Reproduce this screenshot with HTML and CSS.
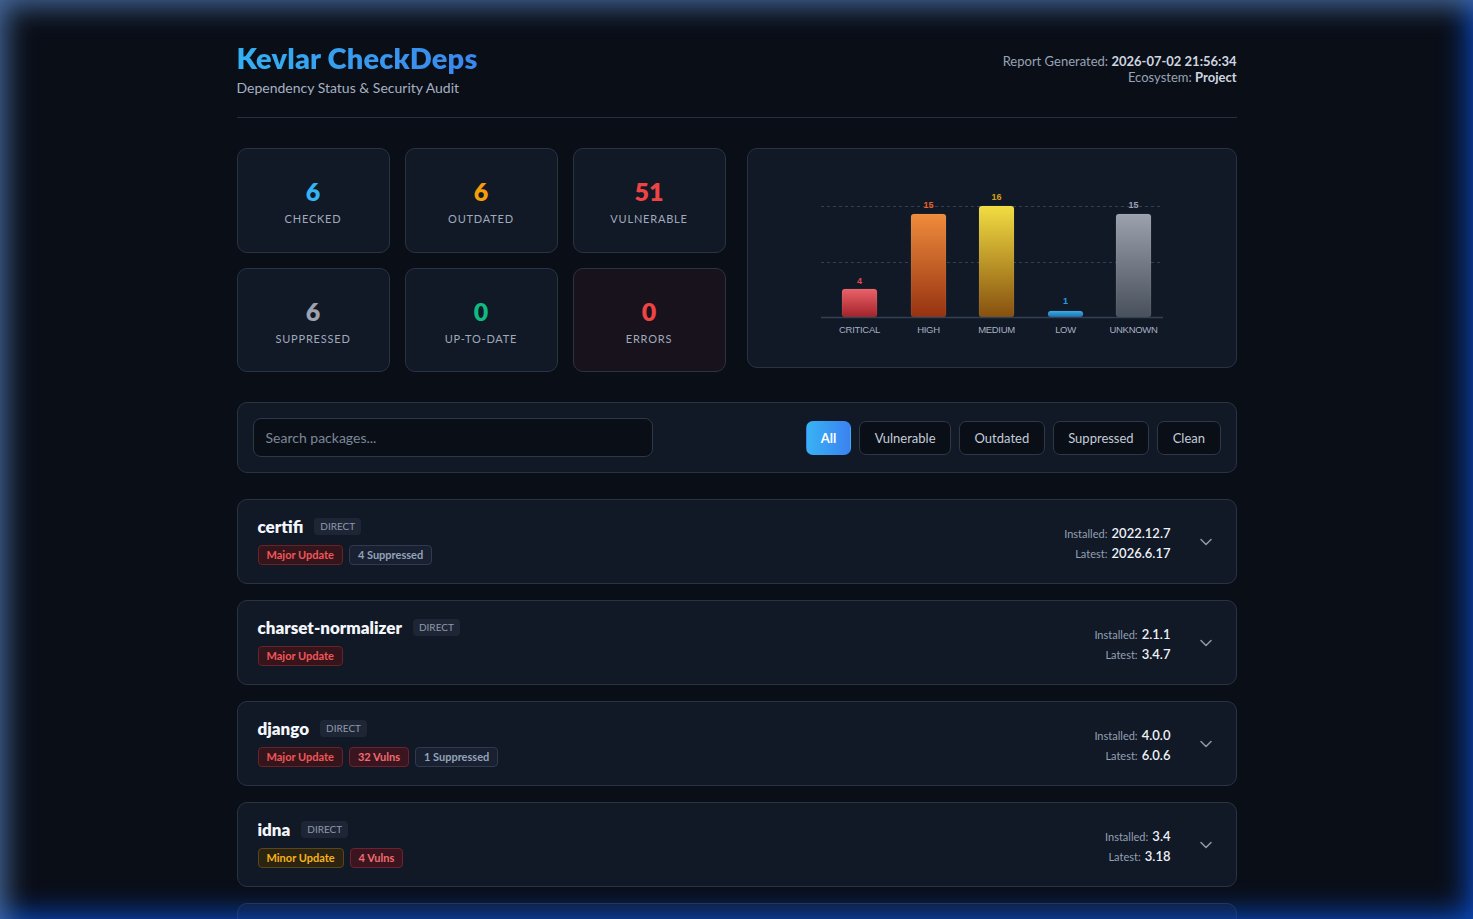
FILE: index.html
```html
<!DOCTYPE html>
<html lang="en">
<head>
<meta charset="utf-8">
<title>Kevlar CheckDeps</title>
<link rel="stylesheet" href="styles.css">
</head>
<body>
<div class="glow"></div>
<div class="container">
  <header class="header">
    <div>
      <h1 class="title">Kevlar CheckDeps</h1>
      <div class="subtitle">Dependency Status &amp; Security Audit</div>
    </div>
    <div class="meta">
      <div>Report Generated: <b>2026-07-02 21:56:34</b></div>
      <div>Ecosystem: <b>Project</b></div>
    </div>
  </header>

  <section class="overview">
    <div class="stats">
      <div class="stat"><div class="num c-blue">6</div><div class="lbl">Checked</div></div>
      <div class="stat"><div class="num c-orange">6</div><div class="lbl">Outdated</div></div>
      <div class="stat"><div class="num c-red">51</div><div class="lbl">Vulnerable</div></div>
      <div class="stat"><div class="num c-gray">6</div><div class="lbl">Suppressed</div></div>
      <div class="stat"><div class="num c-green">0</div><div class="lbl">Up-to-date</div></div>
      <div class="stat stat-err"><div class="num c-red">0</div><div class="lbl">Errors</div></div>
    </div>
    <div class="chart-card">
      <svg class="chart" width="360" height="160" viewBox="0 0 360 160">
        <defs>
          <linearGradient id="gCrit" x1="0" y1="0" x2="0" y2="1"><stop offset="0" stop-color="#ea6169"/><stop offset="1" stop-color="#a3232a"/></linearGradient>
          <linearGradient id="gHigh" x1="0" y1="0" x2="0" y2="1"><stop offset="0" stop-color="#ef8c3c"/><stop offset="1" stop-color="#963211"/></linearGradient>
          <linearGradient id="gMed" x1="0" y1="0" x2="0" y2="1"><stop offset="0" stop-color="#f2dd42"/><stop offset="1" stop-color="#86500f"/></linearGradient>
          <linearGradient id="gLow" x1="0" y1="0" x2="0" y2="1"><stop offset="0" stop-color="#3aabe2"/><stop offset="1" stop-color="#1a72b4"/></linearGradient>
          <linearGradient id="gUnk" x1="0" y1="0" x2="0" y2="1"><stop offset="0" stop-color="#9ba1ad"/><stop offset="1" stop-color="#48505c"/></linearGradient>
        </defs>
        <line x1="9" y1="28.5" x2="351" y2="28.5" class="grid"/>
        <line x1="9" y1="84.5" x2="351" y2="84.5" class="grid"/>
        <rect x="30" y="111" width="35" height="28" rx="3" fill="url(#gCrit)" class="bar"/>
        <rect x="99" y="36" width="35" height="103" rx="3" fill="url(#gHigh)" class="bar"/>
        <rect x="167" y="28" width="35" height="111" rx="3" fill="url(#gMed)" class="bar"/>
        <rect x="236" y="133" width="35" height="6" rx="3" fill="url(#gLow)" class="bar"/>
        <rect x="304" y="36" width="35" height="103" rx="3" fill="url(#gUnk)" class="bar"/>
        <line x1="9" y1="139.5" x2="351" y2="139.5" class="axis"/>
        <text x="47.5" y="106" class="val" fill="#e5484d">4</text>
        <text x="116.5" y="30" class="val" fill="#e8622c">15</text>
        <text x="184.5" y="22" class="val" fill="#d4a017">16</text>
        <text x="253.5" y="126" class="val" fill="#2a9be0">1</text>
        <text x="321.5" y="30" class="val" fill="#9aa3b2">15</text>
        <text x="47.5" y="155" class="cat">CRITICAL</text>
        <text x="116.5" y="155" class="cat">HIGH</text>
        <text x="184.5" y="155" class="cat">MEDIUM</text>
        <text x="253.5" y="155" class="cat">LOW</text>
        <text x="321.5" y="155" class="cat">UNKNOWN</text>
      </svg>
    </div>
  </section>

  <section class="filter-bar">
    <input class="search" type="text" placeholder="Search packages...">
    <div class="filters">
      <button class="fbtn active">All</button>
      <button class="fbtn">Vulnerable</button>
      <button class="fbtn">Outdated</button>
      <button class="fbtn">Suppressed</button>
      <button class="fbtn">Clean</button>
    </div>
  </section>

  <section class="pkg-list">
    <div class="pkg">
      <div class="pkg-main">
        <div class="pkg-head"><span class="pkg-name">certifi</span><span class="tag">Direct</span></div>
        <div class="badges"><span class="badge b-major">Major Update</span><span class="badge b-supp">4 Suppressed</span></div>
      </div>
      <div class="pkg-ver">
        <div class="vrow"><span class="vl">Installed:</span> <span class="vv">2022.12.7</span></div>
        <div class="vrow"><span class="vl">Latest:</span> <span class="vv">2026.6.17</span></div>
      </div>
      <svg class="chev" width="14" height="14" viewBox="0 0 14 14"><path d="M2 4.5 7 9.5 12 4.5" fill="none" stroke="#8b95a7" stroke-width="1.6" stroke-linecap="round" stroke-linejoin="round"/></svg>
    </div>
    <div class="pkg">
      <div class="pkg-main">
        <div class="pkg-head"><span class="pkg-name">charset-normalizer</span><span class="tag">Direct</span></div>
        <div class="badges"><span class="badge b-major">Major Update</span></div>
      </div>
      <div class="pkg-ver">
        <div class="vrow"><span class="vl">Installed:</span> <span class="vv">2.1.1</span></div>
        <div class="vrow"><span class="vl">Latest:</span> <span class="vv">3.4.7</span></div>
      </div>
      <svg class="chev" width="14" height="14" viewBox="0 0 14 14"><path d="M2 4.5 7 9.5 12 4.5" fill="none" stroke="#8b95a7" stroke-width="1.6" stroke-linecap="round" stroke-linejoin="round"/></svg>
    </div>
    <div class="pkg">
      <div class="pkg-main">
        <div class="pkg-head"><span class="pkg-name">django</span><span class="tag">Direct</span></div>
        <div class="badges"><span class="badge b-major">Major Update</span><span class="badge b-vuln">32 Vulns</span><span class="badge b-supp">1 Suppressed</span></div>
      </div>
      <div class="pkg-ver">
        <div class="vrow"><span class="vl">Installed:</span> <span class="vv">4.0.0</span></div>
        <div class="vrow"><span class="vl">Latest:</span> <span class="vv">6.0.6</span></div>
      </div>
      <svg class="chev" width="14" height="14" viewBox="0 0 14 14"><path d="M2 4.5 7 9.5 12 4.5" fill="none" stroke="#8b95a7" stroke-width="1.6" stroke-linecap="round" stroke-linejoin="round"/></svg>
    </div>
    <div class="pkg">
      <div class="pkg-main">
        <div class="pkg-head"><span class="pkg-name">idna</span><span class="tag">Direct</span></div>
        <div class="badges"><span class="badge b-minor">Minor Update</span><span class="badge b-vuln">4 Vulns</span></div>
      </div>
      <div class="pkg-ver">
        <div class="vrow"><span class="vl">Installed:</span> <span class="vv">3.4</span></div>
        <div class="vrow"><span class="vl">Latest:</span> <span class="vv">3.18</span></div>
      </div>
      <svg class="chev" width="14" height="14" viewBox="0 0 14 14"><path d="M2 4.5 7 9.5 12 4.5" fill="none" stroke="#8b95a7" stroke-width="1.6" stroke-linecap="round" stroke-linejoin="round"/></svg>
    </div>
    <div class="pkg pkg-peek"></div>
  </section>
</div>
</body>
</html>
```

FILE: styles.css
```css
* { box-sizing: border-box; }
html, body { margin: 0; padding: 0; }
body {
  background: #0a0e17;
  color: #cbd5e1;
  font-family: Lato, "Noto Sans", sans-serif;
  overflow: hidden;
}
.glow {
  position: fixed;
  inset: 0;
  pointer-events: none;
  z-index: 10;
  box-shadow: inset 14px 14px 28px -8px rgba(80, 120, 175, 0.85),
              inset -14px -14px 28px -8px rgba(8, 72, 190, 0.95);
}
.container {
  width: 1000px;
  margin: 0 auto;
  padding-top: 40px;
}
.header {
  display: flex;
  justify-content: space-between;
  align-items: flex-start;
  padding-bottom: 21px;
  border-bottom: 1px solid #263040;
}
.title {
  margin: 0;
  font-size: 29px;
  line-height: 36px;
  font-weight: 800;
  letter-spacing: 0.15px;
  color: #2ea8f0;
  background: linear-gradient(90deg, #34b0f2, #3b86ec);
  -webkit-background-clip: text;
  background-clip: text;
  -webkit-text-fill-color: transparent;
}
.subtitle {
  font-size: 14px;
  color: #a6b1c2;
  margin-top: 3px;
}
.meta {
  text-align: right;
  font-size: 13px;
  line-height: 16px;
  color: #98a3b5;
  padding-top: 13px;
}
.meta b { color: #cfd6e0; font-weight: 700; }

.overview {
  display: grid;
  grid-template-columns: 489px 1fr;
  gap: 21px;
  margin-top: 30px;
  align-items: start;
}
.stats {
  display: grid;
  grid-template-columns: repeat(3, 1fr);
  grid-template-rows: 105px 104px;
  gap: 15px;
}
.stat {
  background: #111826;
  border: 1px solid #2a3343;
  border-radius: 10px;
  display: flex;
  flex-direction: column;
  align-items: center;
  justify-content: center;
  gap: 6px;
}
.stat-err { background: #17121c; }
.num { font-size: 25px; font-weight: 800; line-height: 30px; }
.lbl {
  font-size: 11px;
  letter-spacing: 0.8px;
  text-transform: uppercase;
  color: #a0aabb;
}
.c-blue { color: #35b4f4; }
.c-orange { color: #f59e0b; }
.c-red { color: #ef4444; }
.c-gray { color: #9ca3af; }
.c-green { color: #10b981; }

.chart-card {
  height: 220px;
  background: #111826;
  border: 1px solid #2a3343;
  border-radius: 10px;
  display: flex;
  align-items: center;
  justify-content: center;
}
.chart { display: block; }
.chart .grid { stroke: #334052; stroke-width: 1; stroke-dasharray: 3 3; }
.chart .axis { stroke: #334052; stroke-width: 1.5; }
.chart .bar { stroke: rgba(255,255,255,0.08); stroke-width: 1; }
.chart .val { font-family: "Liberation Sans", Arial, sans-serif; font-size: 9px; font-weight: 700; text-anchor: middle; }
.chart .cat { font-family: "Liberation Sans", Arial, sans-serif; font-size: 9.5px; fill: #a7b1c2; text-anchor: middle; letter-spacing: -0.3px; }

.filter-bar {
  margin-top: 30px;
  background: #111826;
  border: 1px solid #2a3343;
  border-radius: 10px;
  padding: 15px;
  display: flex;
  justify-content: space-between;
  align-items: center;
}
.search {
  width: 400px;
  height: 39px;
  background: #0a0e17;
  border: 1px solid #2e3849;
  border-radius: 8px;
  padding: 0 12px;
  font-family: inherit;
  font-size: 14px;
  color: #cbd5e1;
  outline: none;
}
.search::placeholder { color: #7d8898; }
.filters { display: flex; gap: 8px; }
.fbtn {
  height: 34px;
  padding: 0 14.5px;
  background: #0a0e17;
  border: 1px solid #2e3849;
  border-radius: 7px;
  color: #c3ccd8;
  font-family: inherit;
  font-size: 13px;
}
.fbtn.active {
  background: linear-gradient(90deg, #38b2f4, #3b82f0);
  border-color: transparent;
  color: #fff;
  font-weight: 700;
  padding: 0 14px;
}

.pkg-list {
  margin-top: 26px;
  display: flex;
  flex-direction: column;
  gap: 16px;
}
.pkg {
  height: 85px;
  flex-shrink: 0;
  background: #111826;
  border: 1px solid #2a3343;
  border-radius: 10px;
  padding: 0 23px 0 20px;
  display: flex;
  align-items: center;
}
.pkg-main { flex: 1; display: flex; flex-direction: column; gap: 9px; padding-bottom: 1px; }
.pkg-head { display: flex; align-items: center; gap: 11px; }
.pkg-name { font-size: 17px; font-weight: 800; color: #f3f6fa; line-height: 18px; }
.tag {
  font-size: 10px;
  text-transform: uppercase;
  color: #8e99ab;
  background: #1e2636;
  border-radius: 4px;
  padding: 2px 6px;
  line-height: 13px;
}
.badges { display: flex; gap: 6px; }
.badge {
  font-size: 11px;
  font-weight: 700;
  line-height: 18px;
  padding: 0 8px;
  border-radius: 4px;
  border: 1px solid;
}
.b-major { background: #34151b; border-color: #6a2128; color: #f0555a; }
.b-vuln { background: #3a1520; border-color: #6e2230; color: #f26b70; }
.b-supp { background: #182031; border-color: #2f3a4c; color: #94a3b8; }
.b-minor { background: #2c2412; border-color: #5b4619; color: #f5b31a; }
.pkg-ver {
  text-align: right;
  margin-right: 28px;
}
.vrow { height: 20px; line-height: 20px; }
.vl { font-size: 11px; color: #94a0b3; }
.vv { font-size: 13px; color: #eef2f7; font-weight: 600; }
.chev { display: block; }
```
